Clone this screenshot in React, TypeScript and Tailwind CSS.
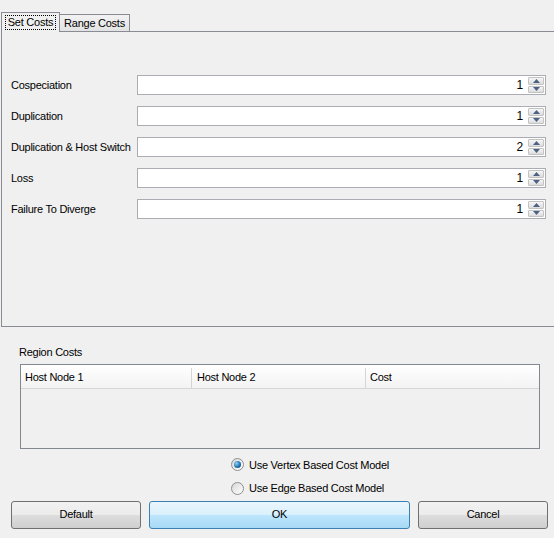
import React from "react";

const rows = [
  { label: "Cospeciation", value: "1" },
  { label: "Duplication", value: "1" },
  { label: "Duplication & Host Switch", value: "2" },
  { label: "Loss", value: "1" },
  { label: "Failure To Diverge", value: "1" },
];

function Arrow({ up }: { up: boolean }) {
  return (
    <svg width="7" height="4" viewBox="0 0 7 4">
      {up ? (
        <polygon points="3.5,0 7,4 0,4" fill="#4d6185" />
      ) : (
        <polygon points="0,0 7,0 3.5,4" fill="#4d6185" />
      )}
    </svg>
  );
}

function Spinner({ value }: { value: string }) {
  return (
    <div className="flex h-[20px] w-[409px] border border-[#abadb3] bg-white">
      <div className="flex flex-1 items-center justify-end pr-[5px] text-[12px] text-black">{value}</div>
      <div className="flex w-[17px] flex-col gap-px py-px pr-px">
        <div className="flex h-[8px] items-center justify-center rounded-[1px] border border-[#c3c3c3] bg-gradient-to-b from-[#f6f6f6] to-[#dcdcdc]">
          <Arrow up />
        </div>
        <div className="flex h-[8px] items-center justify-center rounded-[1px] border border-[#c3c3c3] bg-gradient-to-b from-[#f6f6f6] to-[#dcdcdc]">
          <Arrow up={false} />
        </div>
      </div>
    </div>
  );
}

function Radio({ checked, label }: { checked: boolean; label: string }) {
  return (
    <div className="flex items-center gap-[5px]">
      <div className="flex h-[13px] w-[13px] items-center justify-center rounded-full border border-[#8e8f8f] bg-gradient-to-br from-[#d8d8d8] to-[#ffffff]">
        {checked && (
          <div className="h-[7px] w-[7px] rounded-full bg-[radial-gradient(circle_at_35%_35%,#8fd3f7,#1a6ca8_60%,#0b3f6b)]" />
        )}
      </div>
      <span>{label}</span>
    </div>
  );
}

export default function App() {
  return (
    <div className="relative h-[538px] w-[554px] overflow-hidden bg-[#f0f0f0] font-['Liberation_Sans',Arial,sans-serif] text-[11px] tracking-[-0.25px] text-black">
      {/* Tabs */}
      <div className="flex h-[31px] items-end pl-[1px]">
        <div className="relative z-10 -mb-px flex h-[20px] w-[59px] items-start justify-center border border-b-0 border-[#898c95] bg-[#f0f0f0] pt-[2px]">
          <span className="border border-dotted border-black px-[2px] leading-[13px]">Set Costs</span>
        </div>
        <div className="flex h-[17px] w-[70px] items-center justify-center border border-b-0 border-l-0 border-[#898c95] bg-gradient-to-b from-[#f2f2f2] to-[#e3e3e3]">
          Range Costs
        </div>
      </div>
      {/* Panel */}
      <div className="ml-[1px] h-[296px] w-[600px] border border-r-0 border-[#898c95] bg-[#f0f0f0]">
        <div className="flex flex-col gap-[11px] pl-[9px] pt-[43px]">
          {rows.map((r) => (
            <div key={r.label} className="flex h-[20px] items-center">
              <div className="w-[126px]">{r.label}</div>
              <Spinner value={r.value} />
            </div>
          ))}
        </div>
      </div>
      {/* Region costs */}
      <div className="pl-[19px] pt-[17px]">Region Costs</div>
      <div className="ml-[20px] mt-[3px] h-[85px] w-[520px] border border-[#828790] bg-[#f0f0f0]">
        <div className="flex h-[24px] border-b border-[#d5d5d5] bg-gradient-to-b from-[#ffffff] to-[#f3f3f3] pr-[2px] pt-[3px]">
          <div className="flex w-[171px] items-center border-r border-[#d5d5d5] pl-[4px]">Host Node 1</div>
          <div className="flex w-[174px] items-center border-r border-[#d5d5d5] pl-[5px]">Host Node 2</div>
          <div className="flex flex-1 items-center pl-[4px]">Cost</div>
        </div>
      </div>
      {/* Radios */}
      <div className="ml-[231px] mt-[8px] flex flex-col gap-[7px]">
        <Radio checked label="Use Vertex Based Cost Model" />
        <Radio checked={false} label="Use Edge Based Cost Model" />
      </div>
      {/* Buttons */}
      <div className="mt-[4px] flex gap-[8px] pl-[11px]">
        <div className="flex h-[28px] w-[130px] items-center justify-center rounded-[3px] border border-[#707070] bg-[linear-gradient(#f2f2f2,#ebebeb_50%,#dddddd_50%,#cfcfcf)]">
          Default
        </div>
        <div className="flex h-[28px] w-[261px] items-center justify-center rounded-[3px] border border-[#3c7fb1] bg-[linear-gradient(#eaf6fd,#d9f0fc_50%,#bee6fd_50%,#a7d9f5)]">
          OK
        </div>
        <div className="flex h-[28px] w-[130px] items-center justify-center rounded-[3px] border border-[#707070] bg-[linear-gradient(#f2f2f2,#ebebeb_50%,#dddddd_50%,#cfcfcf)]">
          Cancel
        </div>
      </div>
    </div>
  );
}
